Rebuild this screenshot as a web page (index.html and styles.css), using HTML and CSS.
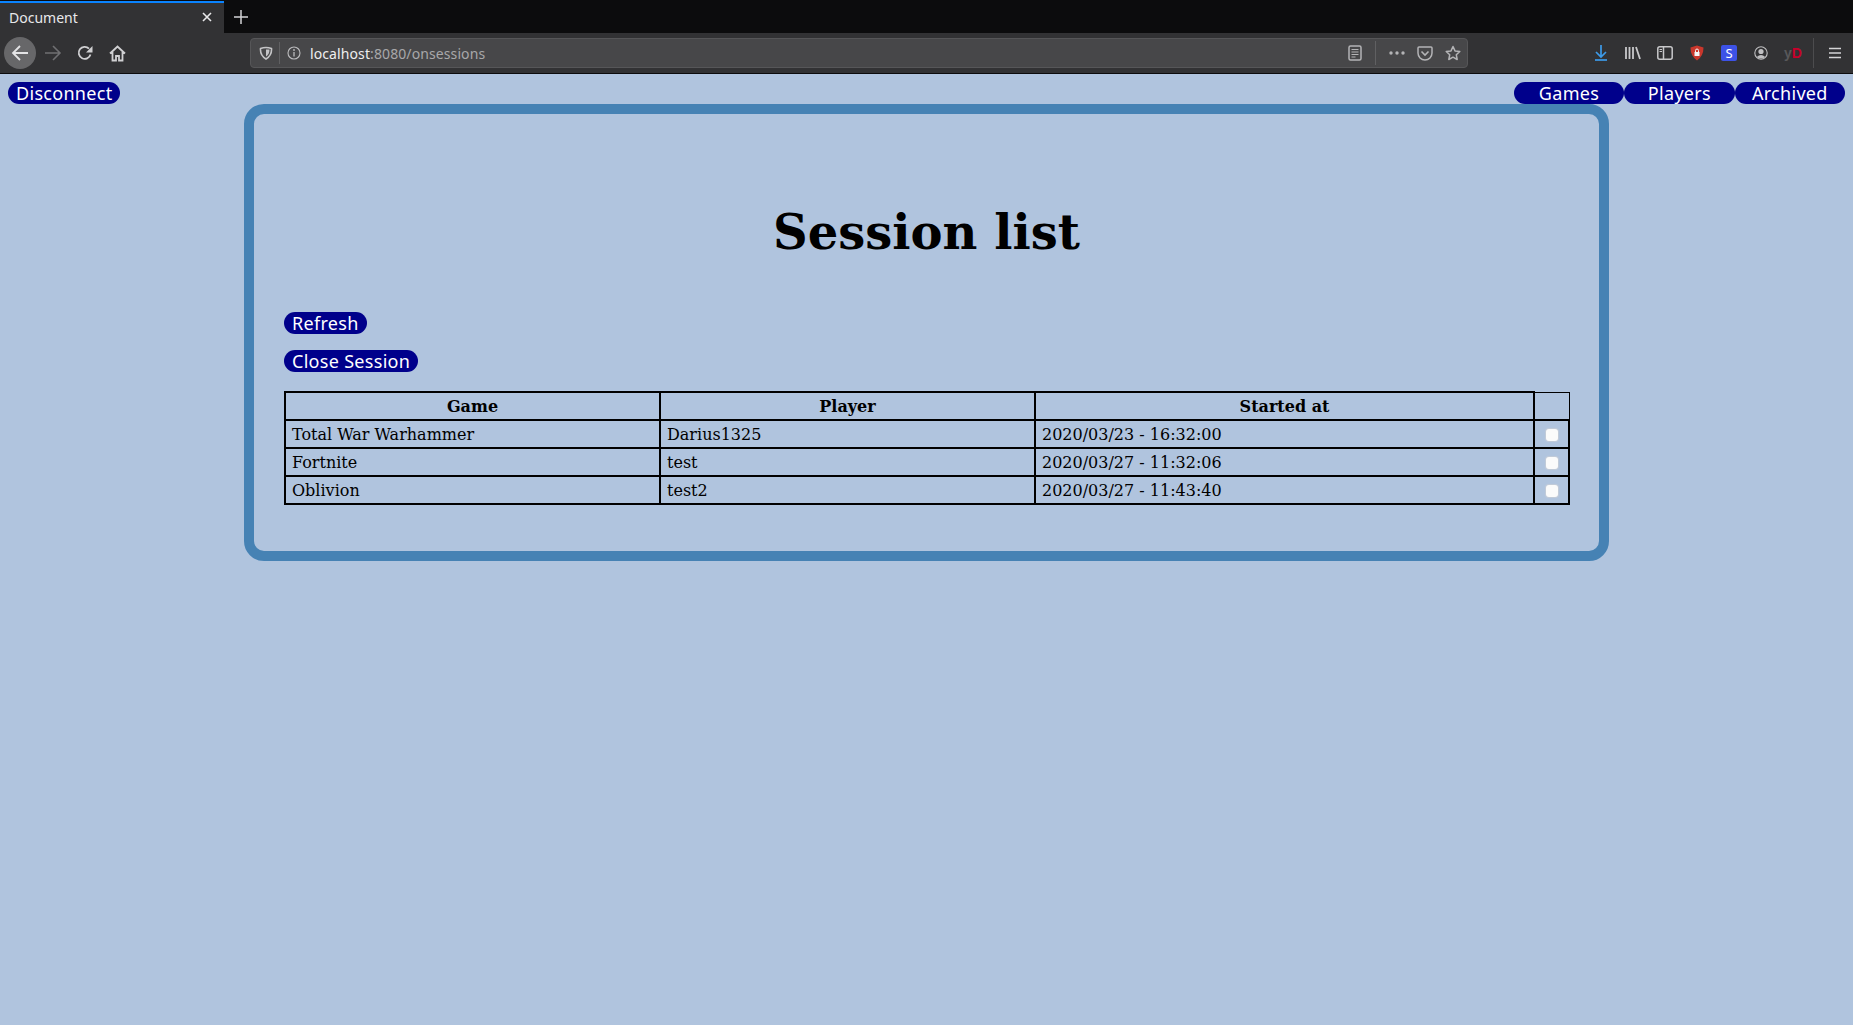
FILE: index.html
```html
<!DOCTYPE html>
<html lang="en">
<head>
    <meta charset="UTF-8" />
    <meta name="viewport" content="width=device-width, initial-scale=1.0" />
    <title>Document</title>
    <link rel="stylesheet" href="styles.css">
</head>
<body>
    <div class="tabStrip">
        <div class="tab">
            <span class="tabTitle">Document</span>
            <svg class="tabClose" width="12" height="12" viewBox="0 0 12 12"><path d="M2 2l8 8M10 2l-8 8" stroke="#e8e8ea" stroke-width="1.6"/></svg>
        </div>
        <svg class="newTab" width="14" height="14" viewBox="0 0 14 14"><path d="M7 0v14M0 7h14" stroke="#d4d4d6" stroke-width="1.5"/></svg>
    </div>

    <div class="toolbar">
        <div class="navIcons">
            <div class="backBtn">
                <svg width="18" height="18" viewBox="0 0 18 18"><path d="M17 9H2M9 2L2 9l7 7" fill="none" stroke="#e4e4e6" stroke-width="1.8"/></svg>
            </div>
            <svg class="fwd" width="18" height="18" viewBox="0 0 18 18"><path d="M1 9h15M9 2l7 7-7 7" fill="none" stroke="#707072" stroke-width="1.6"/></svg>
            <svg class="reload" width="16" height="16" viewBox="0 0 16 16"><path d="M13.500 9.500A6 6 0 1 1 12 3.600" fill="none" stroke="#d0d0d2" stroke-width="1.800"/><path d="M15.500 1v6.500H9z" fill="#d0d0d2"/></svg>
            <svg class="home" width="17" height="17" viewBox="0 0 17 17"><path d="M1 8.500L8.500 1.500 16 8.500M3.500 7v8.500h3.500v-4.500h3v4.500h3.500V7" fill="none" stroke="#d0d0d2" stroke-width="1.800"/></svg>
        </div>

        <div class="urlBar">
            <svg class="shield" width="14" height="14" viewBox="0 0 14 14"><path d="M1.500 2.500Q7 .5 12.500 2.500Q13 9.500 7 13Q1 9.500 1.500 2.500z" fill="none" stroke="#c4c4c6" stroke-width="1.600"/><path d="M7 3.500h3.500Q10.500 8.500 7 10.500z" fill="#c4c4c6"/></svg>
            <span class="urlSep"></span>
            <svg class="info" width="14" height="14" viewBox="0 0 14 14"><circle cx="7" cy="7" r="6" fill="none" stroke="#bcbcbe" stroke-width="1.100"/><path d="M7 6v4.500" stroke="#bcbcbe" stroke-width="1.300"/><circle cx="7" cy="4" r=".9" fill="#bcbcbe"/></svg>
            <span class="url"><span class="urlHost">localhost</span>:8080/onsessions</span>
            <div class="urlActions">
                <svg width="14" height="16" viewBox="0 0 14 16"><rect x="1" y="1" width="12" height="14" rx="1.500" fill="none" stroke="#b4b4b6" stroke-width="1.500"/><path d="M3.500 4.500h7M3.500 7h7M3.500 9.500h7M3.500 12h4" stroke="#b4b4b6"/></svg>
                <span class="urlSep tall"></span>
                <svg width="16" height="4" viewBox="0 0 16 4"><circle cx="2" cy="2" r="1.700" fill="#b4b4b6"/><circle cx="8" cy="2" r="1.700" fill="#b4b4b6"/><circle cx="14" cy="2" r="1.700" fill="#b4b4b6"/></svg>
                <svg width="16" height="15" viewBox="0 0 16 15"><path d="M1 2Q1 1 2 1h12q1 0 1 1v5a7 7 0 0 1-14 0z" fill="none" stroke="#b4b4b6" stroke-width="1.500"/><path d="M4.500 5.500L8 9l3.500-3.500" fill="none" stroke="#b4b4b6" stroke-width="1.600"/></svg>
                <svg width="16" height="16" viewBox="0 0 16 16"><path d="M8 1.500l2 4.400 4.800.6-3.500 3.300.9 4.700L8 12.200l-4.200 2.300.9-4.700L1.200 6.500 6 5.900z" fill="none" stroke="#b4b4b6" stroke-width="1.500" stroke-linejoin="round"/></svg>
            </div>
        </div>

        <div class="extIcons">
            <svg width="12" height="16" viewBox="0 0 12 16"><path d="M6 0v11.500M1 7l5 5 5-5" fill="none" stroke="#3d9be9" stroke-width="1.700"/><path d="M0 15h12" stroke="#3d9be9" stroke-width="1.700"/></svg>
            <svg width="16" height="14" viewBox="0 0 16 14"><path d="M1 1v12M4.500 1v12M8 1v12M11 1l4 12" stroke="#c8c8ca" stroke-width="1.800"/></svg>
            <svg width="16" height="14" viewBox="0 0 16 14"><rect x=".8" y=".8" width="14.400" height="12.400" rx="2" fill="none" stroke="#c8c8ca" stroke-width="1.500"/><path d="M6.500 1v12" stroke="#c8c8ca" stroke-width="1.500"/><path d="M2.500 3.500h2.500M2.500 5.500h2.500" stroke="#c8c8ca"/></svg>
            <svg width="14" height="16" viewBox="0 0 14 16"><path d="M7 .5L13.500 2.500Q13.500 11 7 15.500Q.5 11 .5 2.500z" fill="#c9372c"/><rect x="4.500" y="7" width="5" height="4" fill="#f4f4f4"/><path d="M5.500 7V5.500a1.500 1.500 0 0 1 3 0V7" fill="none" stroke="#f4f4f4"/></svg>
            <span class="extS">S</span>
            <svg width="14" height="14" viewBox="0 0 14 14"><circle cx="7" cy="7" r="6.200" fill="none" stroke="#c0c0c2" stroke-width="1.100"/><circle cx="7" cy="5.500" r="2.600" fill="#c0c0c2"/><path d="M2.800 11Q7 7 11.200 11Q7 14 2.800 11z" fill="#c0c0c2"/></svg>
            <span class="extYd"><span class="extY">y</span><span class="extD">D</span></span>
        </div>
        <span class="toolbarSep"></span>
        <svg class="menu" width="12" height="12" viewBox="0 0 12 12"><path d="M0 1.500h12M0 6h12M0 10.500h12" stroke="#d4d4d6" stroke-width="1.700"/></svg>
    </div>

    <div class="page">
        <div class="topNav">
            <a class="pill" href="#">Disconnect</a>
            <div class="topNavRight">
                <a class="pill wide" href="#">Games</a>
                <a class="pill wide" href="#">Players</a>
                <a class="pill wide" href="#">Archived</a>
            </div>
        </div>

        <div class="panel">
            <h1>Session list</h1>
            <div class="actionRow"><a class="pill" href="#">Refresh</a></div>
            <div class="actionRow"><a class="pill" href="#">Close Session</a></div>

            <table class="sessions">
                <thead>
                    <tr>
                        <th class="colGame">Game</th>
                        <th class="colPlayer">Player</th>
                        <th class="colStarted">Started at</th>
                        <th class="colCheck"></th>
                    </tr>
                </thead>
                <tbody>
                    <tr>
                        <td>Total War Warhammer</td>
                        <td>Darius1325</td>
                        <td>2020/03/23 - 16:32:00</td>
                        <td class="checkCell"><span class="check"></span></td>
                    </tr>
                    <tr>
                        <td>Fortnite</td>
                        <td>test</td>
                        <td>2020/03/27 - 11:32:06</td>
                        <td class="checkCell"><span class="check"></span></td>
                    </tr>
                    <tr>
                        <td>Oblivion</td>
                        <td>test2</td>
                        <td>2020/03/27 - 11:43:40</td>
                        <td class="checkCell"><span class="check"></span></td>
                    </tr>
                </tbody>
            </table>
        </div>
    </div>
</body>
</html>
```

FILE: styles.css
```css
html, body {
  height: 100%;
}

body {
  margin: 0;
  display: flex;
  flex-direction: column;
  overflow: hidden;
  background-color: #b0c4de;
  font-family: "DejaVu Serif", serif;
}

.tabStrip {
  display: flex;
  align-items: center;
  height: 33px;
  background-color: #0c0c0d;
}

.tab {
  display: flex;
  align-items: center;
  justify-content: space-between;
  box-sizing: border-box;
  width: 224px;
  height: 32px;
  margin-top: 1px;
  padding: 0 11px 2px 9px;
  background-color: #323234;
  border-top: 2px solid #0a84ff;
}

.tabTitle {
  font-family: "Noto Sans", sans-serif;
  font-size: 14px;
  color: #e8e8ea;
}

.newTab {
  margin-left: 10px;
}

.toolbar {
  display: flex;
  align-items: center;
  box-sizing: border-box;
  height: 41px;
  background-color: #323234;
  border-bottom: 1px solid #0c0c0d;
}

.navIcons {
  display: flex;
  align-items: center;
  box-sizing: border-box;
  width: 250px;
  padding-left: 4px;
}

.backBtn {
  display: flex;
  align-items: center;
  justify-content: center;
  width: 32px;
  height: 32px;
  border-radius: 50%;
  background-color: #676769;
}

.fwd {
  margin-left: 8px;
}

.reload {
  margin-left: 15px;
}

.home {
  margin-left: 16px;
}

.urlBar {
  display: flex;
  align-items: center;
  box-sizing: border-box;
  width: 1218px;
  height: 30px;
  padding: 0 6px 0 8px;
  background-color: #474749;
  border: 1px solid #565658;
  border-radius: 4px;
}

.urlSep {
  width: 1px;
  height: 22px;
  margin: 0 7px 0 6px;
  background-color: #606062;
}

.url {
  margin-left: 9px;
  font-family: "Noto Sans", sans-serif;
  font-size: 14px;
  letter-spacing: 0.1px;
  color: #a8a8aa;
}

.urlHost {
  color: #eeeeef;
}

.urlActions {
  display: flex;
  align-items: center;
  gap: 12px;
  margin-left: auto;
}

.urlSep.tall {
  margin: 0 1px;
  height: 24px;
}

.extIcons {
  display: grid;
  grid-template-columns: repeat(7, 32px);
  align-items: center;
  justify-items: center;
  margin-left: 117px;
}

.extS {
  display: flex;
  align-items: center;
  justify-content: center;
  width: 16px;
  height: 16px;
  border-radius: 2px;
  background-color: #3d52e6;
  font-family: "Noto Sans", sans-serif;
  font-size: 13px;
  color: #fff;
}

.extYd {
  font-family: "Liberation Sans", sans-serif;
  font-weight: bold;
  font-size: 14px;
}

.extY {
  color: #58585a;
}

.extD {
  color: #c8002a;
}

.toolbarSep {
  width: 1px;
  height: 30px;
  margin-left: 4px;
  background-color: #4c4c4e;
}

.menu {
  margin-left: 15px;
}

.page {
  flex: 1;
}

.topNav {
  display: flex;
  justify-content: space-between;
  padding: 8px 8px 0 8px;
}

.topNavRight {
  display: flex;
}

.pill {
  display: inline-block;
  box-sizing: border-box;
  height: 22px;
  padding: 0 8px;
  border-radius: 11px;
  background-color: #00008b;
  font-family: "Noto Sans", sans-serif;
  font-size: 18px;
  letter-spacing: 0.3px;
  line-height: 22px;
  color: #fff;
  text-align: center;
  text-decoration: none;
}

.pill.wide {
  width: 110.4px;
}

.panel {
  box-sizing: border-box;
  width: 1365px;
  height: 457px;
  margin: 0 0 0 244px;
  padding: 30px 30px 0 30px;
  border: 10px solid #4682b4;
  border-radius: 20px;
}

h1 {
  margin: 60px 0 52px 0;
  font-size: 48px;
  line-height: 56px;
  text-align: center;
  color: #000;
}

.actionRow {
  height: 22px;
  margin-bottom: 16px;
}

.sessions {
  table-layout: fixed;
  width: 1286px;
  margin-top: 19px;
  border-collapse: collapse;
  font-size: 16px;
}

.sessions th,
.sessions td {
  height: 26px;
  padding: 0 6px;
  border: 2px solid #000;
  color: #000;
}

.sessions td {
  text-align: left;
}

.colGame {
  width: 361px;
}

.colPlayer {
  width: 361px;
}

.colStarted {
  width: 485px;
}

.sessions th.colCheck {
  border-top-width: 1px;
  border-right-width: 1px;
}

.sessions td.checkCell {
  text-align: center;
}

.check {
  display: inline-block;
  box-sizing: border-box;
  width: 12px;
  height: 12px;
  vertical-align: middle;
  border-radius: 3px;
  background-color: #fbfbfb;
  box-shadow: 0 0 1px 1px #c4ccd8;
}
```
